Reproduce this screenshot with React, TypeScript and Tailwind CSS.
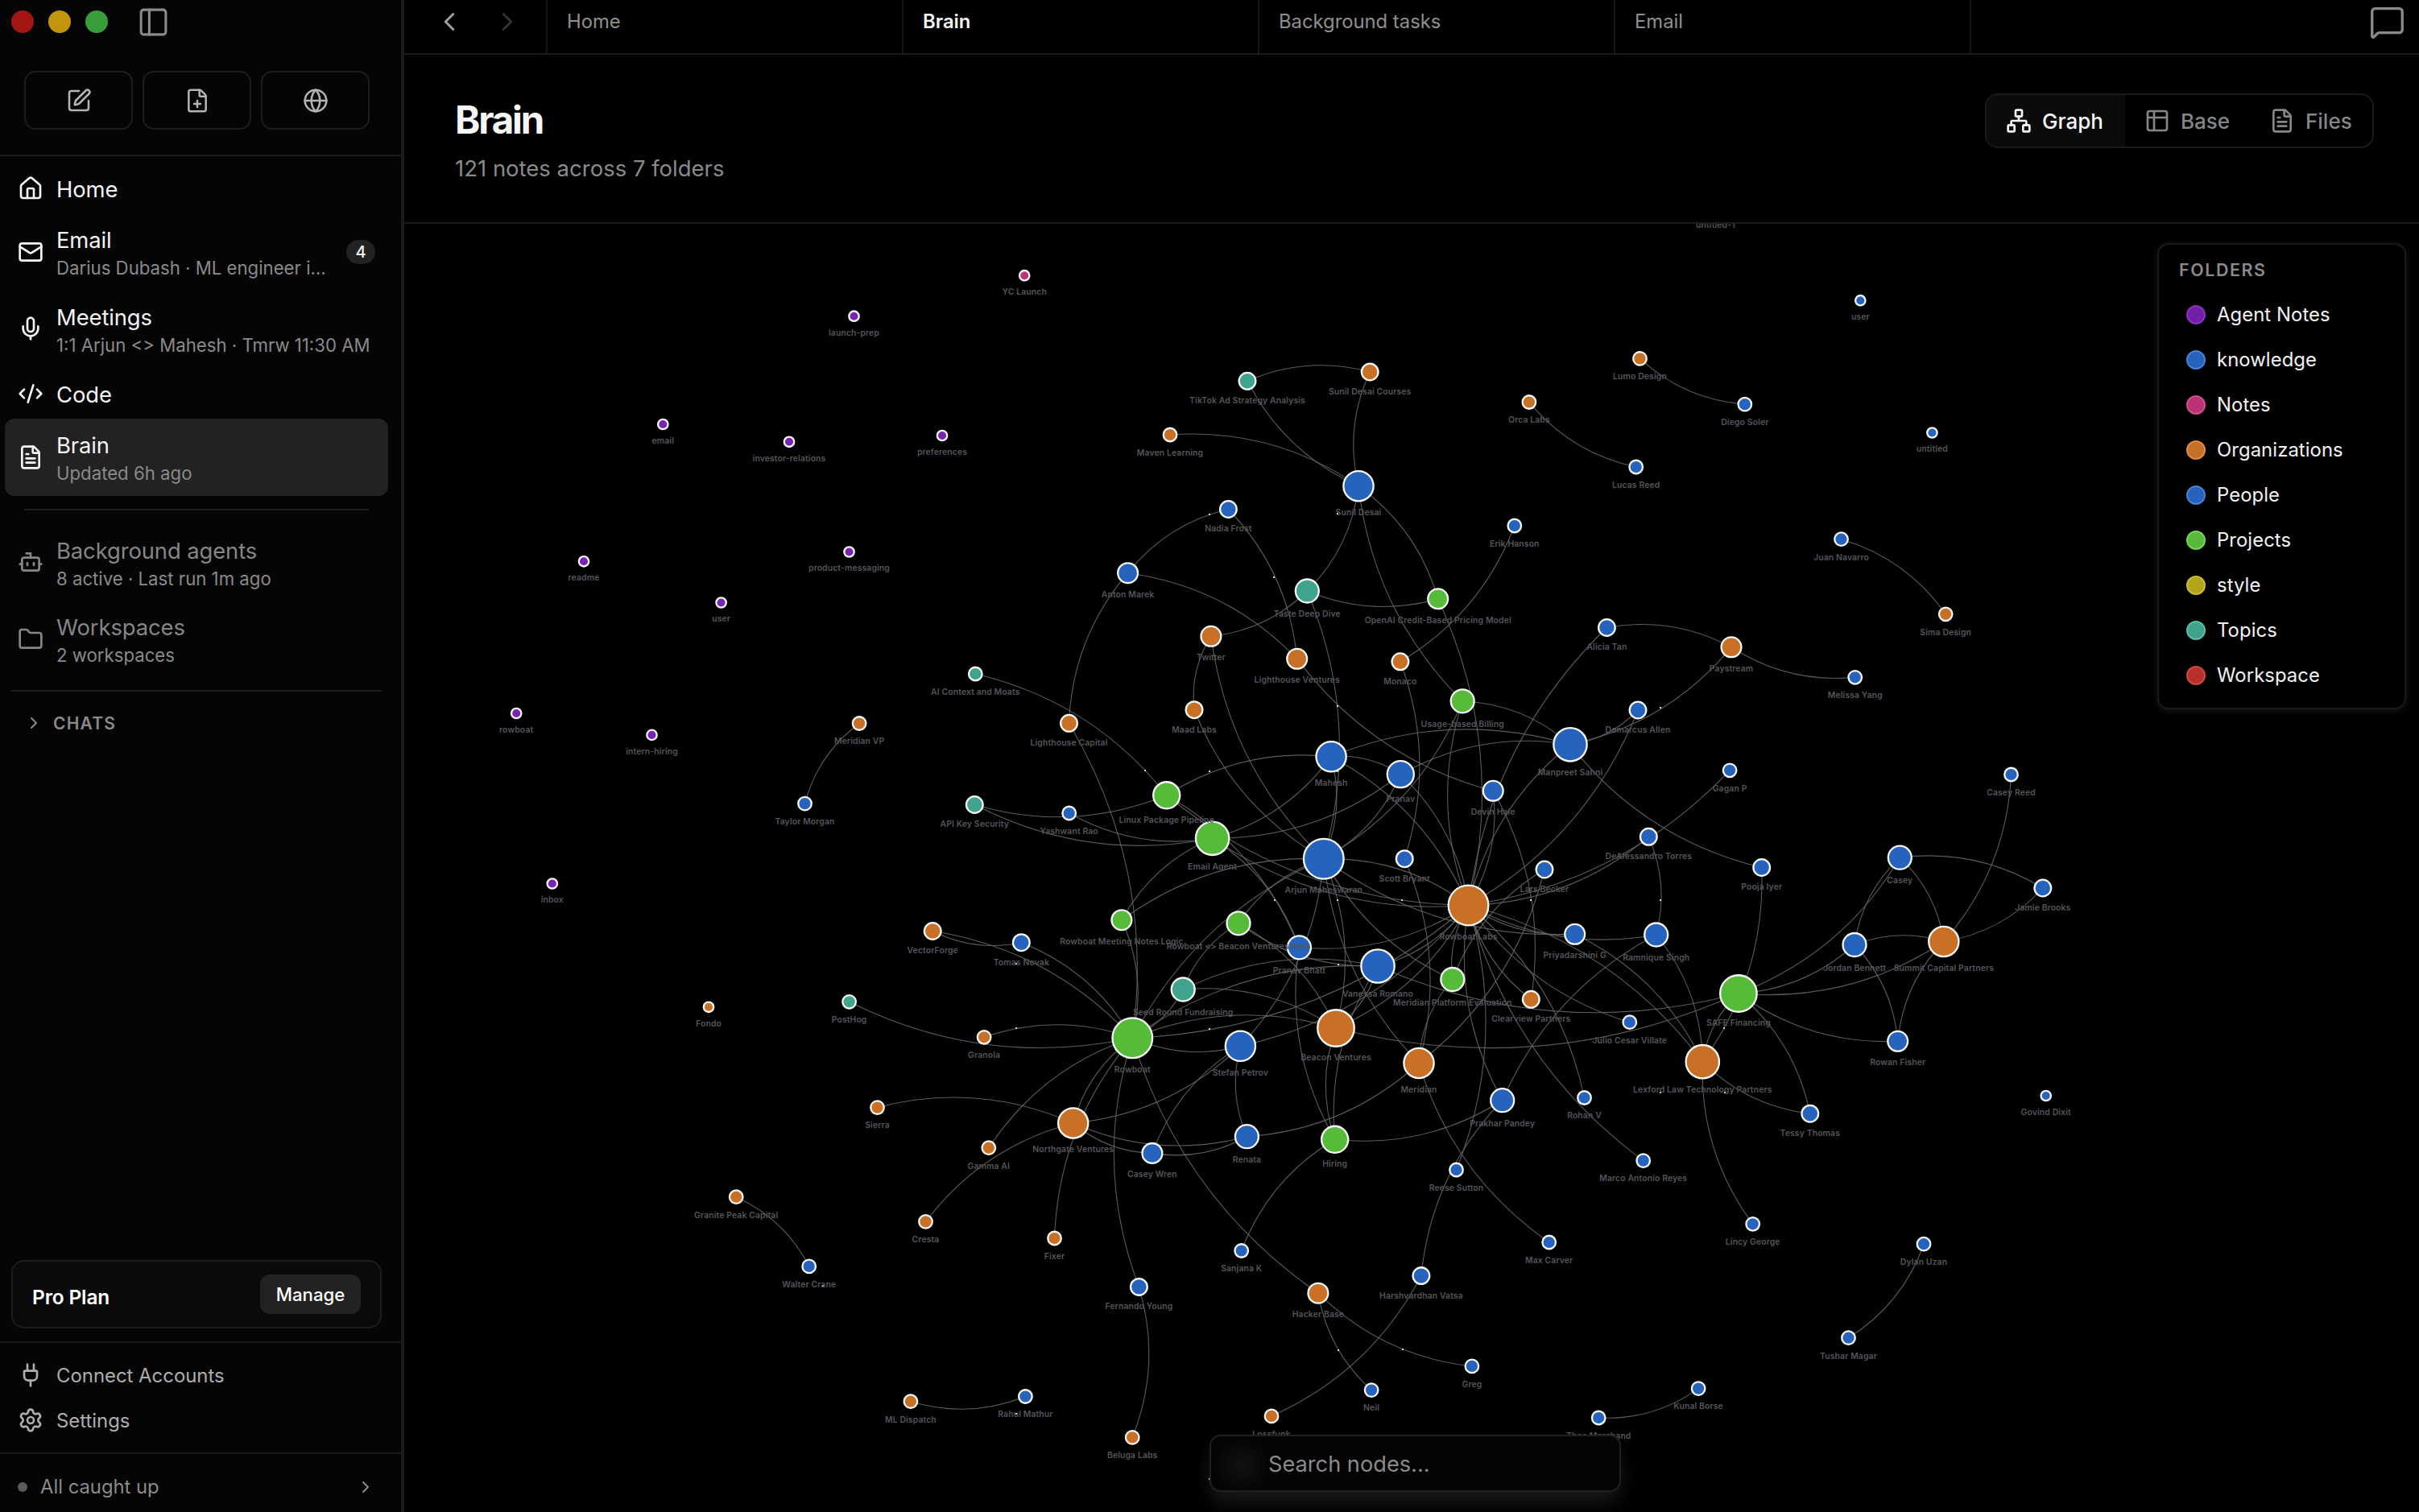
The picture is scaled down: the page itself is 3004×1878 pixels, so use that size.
import type { ReactNode } from "react";
import clsx from "clsx";
import {
  Bot,
  ChevronLeft,
  ChevronRight,
  CodeXml,
  FilePlus,
  FileText,
  Folder,
  Globe,
  House,
  Mail,
  MessageSquare,
  Mic,
  Network,
  PanelLeft,
  Plug,
  Settings,
  SquarePen,
  Table2,
  type LucideIcon,
} from "lucide-react";

type FolderKey = "agent" | "note" | "org" | "person" | "project" | "topic";

type GraphNode = {
  id: string;
  label: string;
  x: number;
  y: number;
  links: number;
  folder: FolderKey;
};

const FOLDER_COLOR: Record<FolderKey, string> = {
  agent: "#7a22b8",
  note: "#bf3378",
  org: "#c87026",
  person: "#2563bd",
  project: "#57bb3a",
  topic: "#3fa38d",
};

const VIEW = { x: 502, y: 278, w: 2502, h: 1600 };

function n(
  folder: FolderKey,
  id: string,
  label: string,
  x: number,
  y: number,
  links: number,
): GraphNode {
  return { folder, id, label, x, y, links };
}

const NODES: GraphNode[] = [
  n("agent", "launch", "launch-prep", 1060.5, 392.7, 0),
  n("agent", "email-note", "email", 823.3, 527, 0),
  n("agent", "investors", "investor-relations", 980, 548.8, 0),
  n("agent", "prefs", "preferences", 1170, 541, 0),
  n("agent", "messaging", "product-messaging", 1054.5, 685.5, 0),
  n("agent", "readme", "readme", 725, 697.3, 0),
  n("agent", "user-note", "user", 895.6, 748.5, 0),
  n("agent", "rowboat-note", "rowboat", 641.2, 886, 0),
  n("agent", "intern", "intern-hiring", 809.5, 912.9, 0),
  n("agent", "inbox", "inbox", 685.8, 1097.5, 0),
  n("note", "yc", "YC Launch", 1272.2, 342.2, 0),
  n("person", "untitled1", "untitled-1", 2130.4, 259, 0),
  n("person", "user", "user", 2310.3, 373.2, 0),
  n("person", "untitled", "untitled", 2399.4, 537.5, 0),
  n("org", "fondo", "Fondo", 880, 1250.8, 0),
  n("person", "govind", "Govind Dixit", 2540.7, 1361, 0),
  n("org", "maven", "Maven Learning", 1453, 540, 1),
  n("topic", "tiktok", "TikTok Ad Strategy Analysis", 1549, 473.3, 2),
  n("org", "courses", "Sunil Desai Courses", 1701.2, 462, 2),
  n("person", "sunil", "Sunil Desai", 1687, 603.7, 6),
  n("org", "orca", "Orca Labs", 1898.9, 499.5, 1),
  n("person", "lucas", "Lucas Reed", 2031.7, 580, 1),
  n("org", "lumo", "Lumo Design", 2036.5, 445.4, 1),
  n("person", "diego", "Diego Soler", 2166.8, 502.1, 1),
  n("person", "nadia", "Nadia Frost", 1525.4, 632.5, 2),
  n("person", "erik", "Erik Hanson", 1880.8, 653, 1),
  n("person", "anton", "Anton Marek", 1400.6, 711.7, 3),
  n("topic", "taste", "Taste Deep Dive", 1623.3, 734, 4),
  n("project", "openai", "OpenAI Credit-Based Pricing Model", 1785.7, 743.8, 3),
  n("org", "twitter", "Twitter", 1503.9, 790.3, 3),
  n("org", "lhv", "Lighthouse Ventures", 1610.7, 818.3, 3),
  n("org", "monaco", "Monaco", 1738.9, 821.8, 2),
  n("topic", "aicontext", "AI Context and Moats", 1211.3, 837, 1),
  n("org", "maad", "Maad Labs", 1483, 881.7, 2),
  n("org", "lhc", "Lighthouse Capital", 1327.5, 898.3, 2),
  n("project", "usage", "Usage-based Billing", 1816.2, 870.8, 4),
  n("org", "mvp", "Meridian VP", 1067.1, 898.5, 1),
  n("person", "taylor", "Taylor Morgan", 999.5, 998.1, 1),
  n("topic", "api", "API Key Security", 1210.3, 999.5, 2),
  n("person", "yash", "Yashwant Rao", 1327.7, 1010, 1),
  n("project", "linux", "Linux Package Pipeline", 1448.7, 987.8, 5),
  n("project", "email", "Email Agent", 1505.6, 1041.3, 7),
  n("person", "mahesh", "Mahesh", 1653.1, 939.8, 6),
  n("person", "pranav", "Pranav", 1739.3, 961.7, 5),
  n("person", "devin", "Devin Hale", 1854.2, 982.3, 3),
  n("person", "manpreet", "Manpreet Sahni", 1950, 924.8, 7),
  n("person", "alicia", "Alicia Tan", 1995.4, 779.5, 2),
  n("org", "paystream", "Paystream", 2150, 803.8, 3),
  n("person", "melissa", "Melissa Yang", 2303.7, 841.3, 1),
  n("person", "juan", "Juan Navarro", 2286.5, 669.7, 1),
  n("org", "sima", "Sima Design", 2416.2, 762.8, 1),
  n("person", "demarcus", "Demarcus Allen", 2034, 882, 2),
  n("person", "gagan", "Gagan P", 2148.1, 956.8, 1),
  n("person", "dea", "DeAlessandro Torres", 2047.3, 1039.3, 2),
  n("person", "arjun", "Arjun Maheswaran", 1643.8, 1066.7, 9),
  n("org", "rlabs", "Rowboat Labs", 1823.5, 1124.5, 9),
  n("person", "scott", "Scott Bryant", 1744.2, 1066.7, 2),
  n("person", "lars", "Lars Becker", 1918, 1080, 2),
  n("person", "priya", "Priyadarshini G", 1955.7, 1160.3, 3),
  n("person", "ramnique", "Ramnique Singh", 2056.7, 1161, 4),
  n("person", "pooja", "Pooja Iyer", 2187.7, 1077.5, 2),
  n("person", "casey", "Casey", 2359.3, 1065.2, 4),
  n("person", "creed", "Casey Reed", 2497.5, 962, 1),
  n("person", "jamie", "Jamie Brooks", 2536.8, 1103, 2),
  n("person", "jordan", "Jordan Bennett", 2303, 1173.5, 4),
  n("org", "summit", "Summit Capital Partners", 2413.8, 1169.5, 6),
  n("person", "rowan", "Rowan Fisher", 2356.7, 1293.3, 3),
  n("project", "safe", "SAFE Financing", 2158.9, 1234, 8),
  n("org", "lexford", "Lexford Law Technology Partners", 2114.3, 1318.7, 7),
  n("person", "tessy", "Tessy Thomas", 2247.8, 1383.2, 2),
  n("person", "julio", "Julio Cesar Villate", 2023.8, 1269.7, 1),
  n("org", "clearview", "Clearview Partners", 1901.3, 1241.3, 2),
  n("project", "mpe", "Meridian Platform Evaluation", 1803.8, 1216.5, 4),
  n("person", "vanessa", "Vanessa Romano", 1711, 1200, 7),
  n("person", "pbhatt", "Pranav Bhatt", 1613.4, 1176.8, 4),
  n("org", "beacon", "Beacon Ventures", 1659, 1277, 8),
  n("org", "meridian", "Meridian", 1762, 1320.5, 6),
  n("person", "prakhar", "Prakhar Pandey", 1865.7, 1366.7, 4),
  n("person", "rohan", "Rohan V", 1967.5, 1363.5, 1),
  n("person", "marco", "Marco Antonio Reyes", 2040.7, 1441.6, 1),
  n("project", "hiring", "Hiring", 1657.7, 1415.3, 5),
  n("person", "reese", "Reese Sutton", 1808.5, 1453, 1),
  n("project", "rmn", "Rowboat Meeting Notes Logic", 1392.9, 1142.7, 3),
  n("project", "intro", "Rowboat <> Beacon Ventures Intro", 1538, 1146.8, 4),
  n("topic", "seed", "Seed Round Fundraising", 1469.2, 1229, 4),
  n("project", "rowboat", "Rowboat", 1406.3, 1289.3, 9),
  n("org", "granola", "Granola", 1222.1, 1288.3, 1),
  n("person", "stefan", "Stefan Petrov", 1540.4, 1299.3, 6),
  n("org", "vector", "VectorForge", 1158.2, 1156.5, 2),
  n("person", "tomas", "Tomas Novak", 1268.3, 1170.7, 2),
  n("topic", "posthog", "PostHog", 1054.6, 1244.3, 1),
  n("org", "northgate", "Northgate Ventures", 1332.7, 1395, 6),
  n("org", "gamma", "Gamma AI", 1227.8, 1425.7, 1),
  n("person", "wren", "Casey Wren", 1430.9, 1432.4, 3),
  n("person", "renata", "Renata", 1548.4, 1411.7, 4),
  n("org", "sierra", "Sierra", 1089.5, 1375.6, 1),
  n("org", "cresta", "Cresta", 1149.5, 1517.4, 1),
  n("org", "fixer", "Fixer", 1309.5, 1538, 1),
  n("person", "sanjana", "Sanjana K", 1541.7, 1553.5, 1),
  n("person", "fernando", "Fernando Young", 1414.4, 1598.4, 2),
  n("org", "hacker", "Hacker Base", 1636.9, 1606.2, 3),
  n("person", "harsh", "Harshvardhan Vatsa", 1764.9, 1584.6, 2),
  n("person", "greg", "Greg", 1827.9, 1696.9, 1),
  n("person", "neil", "Neil", 1703.1, 1726.6, 1),
  n("org", "lossfunk", "Lossfunk", 1579, 1758.9, 1),
  n("org", "beluga", "Beluga Labs", 1406.2, 1785.4, 1),
  n("person", "rahul", "Rahul Mathur", 1273.4, 1734.5, 1),
  n("org", "mldispatch", "ML Dispatch", 1130.9, 1740.7, 1),
  n("org", "granite", "Granite Peak Capital", 914.2, 1486.7, 1),
  n("person", "walter", "Walter Crane", 1004.7, 1572.9, 1),
  n("person", "max", "Max Carver", 1923.7, 1543, 1),
  n("person", "lincy", "Lincy George", 2176.7, 1520.3, 1),
  n("person", "dylan", "Dylan Uzan", 2389, 1545.2, 1),
  n("person", "tushar", "Tushar Magar", 2295.5, 1661.7, 1),
  n("person", "kunal", "Kunal Borse", 2109.1, 1724.6, 1),
  n("person", "theo", "Theo Marchand", 1985.2, 1761, 1),
];

// Each pair bows to the left of its direction of travel
const EDGES =
  `tiktok>courses sunil>tiktok maven>sunil sunil>courses sunil>taste usage>sunil sunil>openai
  anton>nadia nadia>lhv lhc>anton anton>lhv openai>taste taste>twitter taste>arjun openai>rlabs
  maad>twitter arjun>twitter arjun>maad devin>lhv erik>monaco monaco>scott scott>meridian
  aicontext>linux linux>api email>api email>yash linux>mahesh linux>pbhatt rlabs>linux
  email>pbhatt rlabs>email mahesh>email pranav>email rmn>email rmn>arjun rmn>rowboat lhc>rowboat
  mahesh>pranav mahesh>manpreet mahesh>rlabs mahesh>arjun pranav>manpreet pranav>arjun
  pranav>rlabs usage>manpreet rlabs>usage usage>arjun paystream>manpreet demarcus>manpreet
  rlabs>manpreet pooja>manpreet demarcus>rlabs alicia>paystream rlabs>alicia devin>clearview
  devin>rlabs melissa>paystream juan>sima gagan>rlabs dea>rlabs dea>ramnique pooja>lexford
  mpe>lars lars>meridian mpe>rlabs mpe>arjun meridian>mpe meridian>arjun meridian>renata
  max>meridian arjun>rlabs priya>arjun arjun>stefan arjun>beacon intro>arjun rowboat>arjun
  seed>intro seed>vanessa seed>beacon seed>rowboat vanessa>intro intro>beacon rlabs>pbhatt
  hiring>pbhatt rowboat>vanessa rlabs>vanessa rlabs>rowboat rlabs>stefan rlabs>beacon
  vanessa>beacon hiring>vanessa hiring>beacon safe>vanessa rowboat>beacon safe>beacon
  prakhar>hiring sanjana>hiring stefan>rowboat stefan>northgate wren>stefan renata>stefan
  wren>northgate renata>wren renata>northgate fixer>rowboat northgate>rowboat sierra>northgate
  cresta>northgate gamma>rowboat granola>rowboat rowboat>posthog tomas>rowboat vector>rowboat
  tomas>vector fernando>rowboat fernando>beluga hacker>rowboat neil>hacker greg>hacker
  harsh>lossfunk harsh>prakhar rlabs>reese prakhar>rlabs prakhar>ramnique rlabs>rohan
  marco>rlabs clearview>rlabs julio>rlabs rlabs>lexford priya>lexford ramnique>lexford
  priya>rlabs ramnique>rlabs lexford>safe casey>safe jordan>safe summit>safe rowan>safe
  safe>tessy tessy>lexford lincy>lexford casey>jamie casey>summit jordan>casey jordan>summit
  jordan>rowan rowan>summit jamie>summit creed>summit dylan>tushar kunal>theo rahul>mldispatch
  granite>walter lucas>orca diego>lumo taylor>mvp`
    .split(/\s+/)
    .map((pair) => pair.split(">"));

const SPARKS = [
  [1661, 638], [1502, 639], [1582, 717], [1661, 877], [2062, 879], [1422, 957],
  [1502, 958], [1661, 958], [1583, 1118], [1661, 1118], [1741, 1118],
  [1901, 1118], [2062, 1118], [1662, 1198], [1262, 1197], [1262, 1277], [1502, 1278],
  [2141, 1277], [1502, 1837], [1662, 1677], [1742, 1676], [1022, 1597], [1262, 1756],
  [2062, 1357], [2142, 1357],
];

const BY_ID = new Map(NODES.map((node) => [node.id, node]));

function radius(links: number) {
  return 6.2 + links * 2.07;
}

function edgePath(from: string, to: string) {
  const a = BY_ID.get(from)!;
  const b = BY_ID.get(to)!;
  const cx = (a.x + b.x) / 2 + (b.y - a.y) * 0.174;
  const cy = (a.y + b.y) / 2 - (b.x - a.x) * 0.174;
  return `M${a.x} ${a.y}Q${cx} ${cy} ${b.x} ${b.y}`;
}

function BrainGraph() {
  return (
    <svg
      className="block h-full w-full font-[Inter,sans-serif]"
      viewBox={`${VIEW.x} ${VIEW.y} ${VIEW.w} ${VIEW.h}`}
    >
      <g fill="none" stroke="#6b6b6b" strokeWidth={1.1} strokeOpacity={0.85}>
        {EDGES.map(([from, to]) => (
          <path key={`${from}-${to}`} d={edgePath(from, to)} />
        ))}
      </g>
      {SPARKS.map(([x, y]) => (
        <rect key={`${x}-${y}`} x={x - 1} y={y - 1} width={2} height={2} fill="#d4d4d4" />
      ))}
      {NODES.map((node) => (
        <circle
          key={node.id}
          cx={node.x}
          cy={node.y}
          r={radius(node.links)}
          fill={FOLDER_COLOR[node.folder]}
          stroke="#f8f8f8"
          strokeWidth={2.3}
        />
      ))}
      <g fill="#54545b" fontSize={10.4} fontWeight={600} textAnchor="middle" letterSpacing={0.12}>
        {NODES.map((node) => (
          <text key={node.id} x={node.x} y={node.y + radius(node.links) + 17.6}>
            {node.label}
          </text>
        ))}
      </g>
    </svg>
  );
}

const LEGEND = [
  { name: "Agent Notes", dot: "bg-[#7320a8] border-[#8a30c4]" },
  { name: "knowledge", dot: "bg-[#2563bd] border-[#4a80d0]" },
  { name: "Notes", dot: "bg-[#bb3176] border-[#d0508f]" },
  { name: "Organizations", dot: "bg-[#c66f26] border-[#da8b48]" },
  { name: "People", dot: "bg-[#2563bd] border-[#4a80d0]" },
  { name: "Projects", dot: "bg-[#57b93a] border-[#78d05e]" },
  { name: "style", dot: "bg-[#b3a41a] border-[#c9bb3c]" },
  { name: "Topics", dot: "bg-[#3fa28c] border-[#5fbaa5]" },
  { name: "Workspace", dot: "bg-[#b7302b] border-[#d04740]" },
];

function FolderLegend() {
  return (
    <div className="absolute right-[16px] top-[24px] h-[579px] w-[309px] rounded-[14px] border-2 border-[#191919] bg-black pl-[25px] pt-[18px] shadow-[0_2px_8px_rgba(255,255,255,0.09)]">
      <div className="text-[21.4px] font-semibold leading-[26px] tracking-[1.6px] text-[#8a8a8a]">
        FOLDERS
      </div>
      <ul className="mt-[15px]">
        {LEGEND.map((item) => (
          <li key={item.name} className="flex h-14 items-center gap-[14px] pl-[9px]">
            <span className={clsx("size-6 rounded-full border-2", item.dot)} />
            <span className="text-[23.8px] tracking-[0.1px] text-[#f2f2f2]">{item.name}</span>
          </li>
        ))}
      </ul>
    </div>
  );
}

type NavItemProps = {
  icon: LucideIcon;
  title: string;
  subtitle?: string;
  badge?: string;
  active?: boolean;
  muted?: boolean;
};

function NavItem({ icon: Icon, title, subtitle, badge, active, muted }: NavItemProps) {
  return (
    <div
      className={clsx(
        "ml-[6px] flex w-[476px] items-center rounded-xl pl-4",
        subtitle ? "h-[95.5px]" : "h-[63px]",
        active && "bg-[#222222]",
        muted ? "text-[#868686]" : "text-[#f4f4f4]",
      )}
    >
      <Icon className="size-8 shrink-0" strokeWidth={2} />
      <div className={clsx("ml-4 flex-1", subtitle ? "pt-[5px]" : "pt-[2px]")}>
        <div className="text-[27.4px] leading-[36px] tracking-[-0.1px]">{title}</div>
        {subtitle && (
          <div className="whitespace-nowrap text-[22.2px] leading-[34px] text-[#8a8a8a]">
            {subtitle}
          </div>
        )}
      </div>
      {badge && (
        <span className="mr-4 flex h-[30px] w-9 items-center justify-center rounded-full bg-[#222222] text-[20px] font-medium">
          {badge}
        </span>
      )}
    </div>
  );
}

function QuickButton({ icon: Icon }: { icon: LucideIcon }) {
  return (
    <button className="flex h-[73px] w-[135px] items-center justify-center rounded-[14px] border-2 border-[#1d1d1d] text-[#b4b4b4]">
      <Icon className="size-8" strokeWidth={1.9} />
    </button>
  );
}

function Sidebar() {
  return (
    <aside className="flex w-[502px] shrink-0 flex-col border-r-4 border-[#1b1b1b] bg-[#050505]">
      <div className="flex h-[54px] items-center pl-[14px]">
        <div className="flex gap-[18px]">
          <span className="size-7 rounded-full bg-[#a31613]" />
          <span className="size-7 rounded-full bg-[#c1960b]" />
          <span className="size-7 rounded-full bg-[#389e3b]" />
        </div>
        <PanelLeft className="ml-[36px] mt-px size-[41px] text-[#8a8a8a]" strokeWidth={1.8} />
      </div>
      <div className="mt-[34px] flex gap-[12px] pl-[30px]">
        <QuickButton icon={SquarePen} />
        <QuickButton icon={FilePlus} />
        <QuickButton icon={Globe} />
      </div>
      <div className="mb-[8px] mt-[31px] h-[2px] bg-[#1b1b1b]" />

      <nav>
        <NavItem icon={House} title="Home" />
        <NavItem
          icon={Mail}
          title="Email"
          subtitle="Darius Dubash · ML engineer i…"
          badge="4"
        />
        <NavItem icon={Mic} title="Meetings" subtitle="1:1 Arjun <> Mahesh · Tmrw 11:30 AM" />
        <div className="h-px" />
        <NavItem icon={CodeXml} title="Code" />
        <NavItem icon={FileText} title="Brain" subtitle="Updated 6h ago" active />
        <div className="mb-[17px] ml-[30px] mt-4 h-[2px] w-[428px] bg-[#1e1e1e]" />
        <NavItem icon={Bot} title="Background agents" subtitle="8 active · Last run 1m ago" muted />
        <NavItem icon={Folder} title="Workspaces" subtitle="2 workspaces" muted />
      </nav>
      <div className="ml-[14px] mt-[15px] h-[2px] w-[460px] bg-[#1e1e1e]" />
      <div className="mt-[24px] flex items-center pl-[30px] text-[#8a8a8a]">
        <ChevronRight className="size-6" strokeWidth={2} />
        <span className="ml-3 text-[21px] font-semibold tracking-[1.2px]">CHATS</span>
      </div>

      <div className="ml-[14px] mt-auto flex h-[85px] w-[460px] items-center justify-between rounded-2xl border-2 border-[#1d1d1d] bg-[#0a0a0a] pl-6 pr-6">
        <span className="mt-[7px] text-[24.4px] font-semibold tracking-[-0.1px] text-white">
          Pro Plan
        </span>
        <button className="h-[49px] w-[125px] rounded-xl bg-[#222222] text-[22.2px] font-medium text-white">
          Manage
        </button>
      </div>
      <div className="mt-4 border-y-2 border-[#1b1b1b] py-[12px] text-[#adadad]">
        <FooterLink icon={<Plug className="size-8" />} label="Connect Accounts" />
        <FooterLink icon={<Settings className="size-8" />} label="Settings" />
      </div>
      <div className="flex h-[72px] items-center pl-[22px] pr-[32px] pt-[10px] text-[#8a8a8a]">
        <span className="size-3 rounded-full bg-[#5a5a5a]" />
        <span className="ml-4 flex-1 text-[23.8px]">All caught up</span>
        <ChevronRight className="size-6" />
      </div>
    </aside>
  );
}

function FooterLink({ icon, label }: { icon: ReactNode; label: string }) {
  return (
    <div className="flex h-14 items-center gap-4 pl-[22px]">
      {icon}
      <span className="pt-px text-[23.9px]">{label}</span>
    </div>
  );
}

const TABS = ["Home", "Brain", "Background tasks", "Email"];

function TabBar() {
  return (
    <div className="flex h-[68px] border-b-2 border-[#1b1b1b]">
      <div className="flex w-[178px] border-r-2 border-[#161616] pl-[37px] pt-[8px]">
        <ChevronLeft className="size-[38px] text-[#a0a0a0]" strokeWidth={1.9} />
        <ChevronRight className="ml-[34px] size-[38px] text-[#333333]" strokeWidth={1.9} />
      </div>
      {TABS.map((tab) => (
        <div
          key={tab}
          className={clsx(
            "w-[442px] border-r-2 border-[#161616] pl-[24px] pt-[9px] leading-[36px]",
            tab === "Brain"
              ? "text-[23.8px] font-semibold text-[#f4f4f4]"
              : "text-[23.8px] text-[#8f8f8f]",
          )}
        >
          {tab}
        </div>
      ))}
      <MessageSquare className="ml-auto mr-[17px] mt-[5px] size-[45px] text-[#8a8a8a]" strokeWidth={1.8} />
    </div>
  );
}

function ViewSwitch() {
  return (
    <div className="flex h-[68px] overflow-hidden rounded-2xl border-2 border-[#1b1b1b] text-[26px] font-medium text-[#868686]">
      <div className="flex w-[172px] items-center gap-[13px] bg-[#0b0b0b] pl-[24px] text-[#f4f4f4]">
        <Network className="size-8" />
        Graph
      </div>
      <div className="flex w-[155px] items-center gap-[13px] pl-[24px]">
        <Table2 className="size-8" />
        Base
      </div>
      <div className="flex w-[152px] items-center gap-[13px] pl-[24px]">
        <FileText className="size-8" />
        Files
      </div>
    </div>
  );
}

export default function App() {
  return (
    <div className="flex h-[1878px] w-[3004px] overflow-hidden bg-black font-[Inter,sans-serif]">
      <Sidebar />
      <main className="flex min-w-0 flex-1 flex-col">
        <TabBar />
        <header className="flex h-[210px] items-start justify-between border-b-2 border-[#1b1b1b] pl-[63px] pr-[56px] pt-[48px]">
          <div>
            <h1 className="mt-[3px] text-[47.5px] font-bold leading-[60px] tracking-[-2.2px] text-[#f6f6f6]">
              Brain
            </h1>
            <p className="mt-[12px] text-[27.5px] leading-[36px] text-[#8a8a8a]">
              121 notes across 7 folders
            </p>
          </div>
          <ViewSwitch />
        </header>
        <section className="relative min-h-0 flex-1">
          <BrainGraph />
          <FolderLegend />
          <div className="absolute bottom-[25px] left-[1000px] flex h-[71px] w-[511px] items-center rounded-[14px] border-2 border-[#202020] bg-[#040404] bg-[radial-gradient(circle_at_38px_36px,#111111_0,#040404_36px)] pl-[71px] pt-[3px] text-[27.2px] text-[#8a8a8a] shadow-[0_14px_24px_-3px_rgba(255,255,255,0.11)]">
            Search nodes...
          </div>
        </section>
      </main>
    </div>
  );
}
